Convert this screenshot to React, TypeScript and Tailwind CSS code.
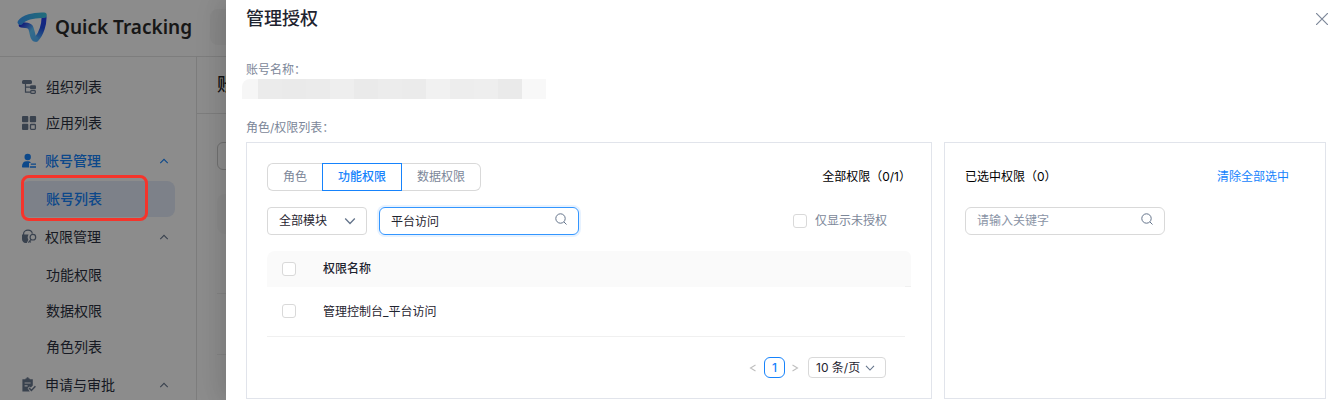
import React, { useState } from 'react';

type MenuItem = {
  label: string;
  icon?: React.ReactNode;
  kind: 'link' | 'group' | 'child';
  active?: boolean;
};

const OrgIcon = () => (
  <svg className="h-4 w-4" viewBox="0 0 16 16" fill="none">
    <rect x="1" y="1" width="10" height="4" rx="1.5" fill="currentColor" />
    <path d="M4.5 5v8.2h5M4.5 8.2h5" stroke="currentColor" strokeWidth="1.2" />
    <rect x="9" y="6.2" width="6" height="4" rx="1.2" fill="currentColor" />
    <rect x="9.7" y="11.6" width="4.6" height="2.8" rx="0.8" stroke="currentColor" strokeWidth="1.3" />
  </svg>
);

const AppsIcon = () => (
  <svg className="h-4 w-4" viewBox="0 0 16 16" fill="none">
    <rect x="1" y="1" width="6.3" height="6.3" rx="1" fill="currentColor" />
    <rect x="8.8" y="1" width="6.3" height="6.3" rx="1" fill="currentColor" />
    <rect x="1" y="8.8" width="6.3" height="6.3" rx="1" fill="currentColor" />
    <rect x="9.5" y="9.5" width="4.9" height="4.9" rx="0.8" stroke="currentColor" strokeWidth="1.3" />
  </svg>
);

const AccountIcon = () => (
  <svg className="h-4 w-4" viewBox="0 0 16 16" fill="none">
    <circle cx="6.7" cy="4" r="3.2" fill="currentColor" />
    <path d="M1 13.6C1 10 3 8.2 5.4 8.2h2.2c1.3 0 1.9.7 2.2 1.8H8v4.6H2c-.6 0-1-.4-1-1z" fill="currentColor" />
    <path d="M9.8 11.2H15M8.8 14H15" stroke="currentColor" strokeWidth="1.3" />
  </svg>
);

const PermissionIcon = () => (
  <svg className="h-4 w-4" viewBox="0 0 16 16" fill="none">
    <path d="M2.6 6V4.8C2.6 2.6 4.6 1.2 7 1.2s4 1.3 4.3 3.4" stroke="currentColor" strokeWidth="1.2" />
    <path d="M1 5.6h6.6C6.4 7.4 6.4 9.4 7.4 10.8L5.8 14H4C2.3 13.4 1 12 1 10z" fill="currentColor" />
    <circle cx="11.9" cy="8.2" r="2.8" stroke="currentColor" strokeWidth="1.2" />
    <path d="M10 10.4 7.4 13.6M8.6 12.2l1.3 1.2" stroke="currentColor" strokeWidth="1.2" />
  </svg>
);

const ApprovalIcon = () => (
  <svg className="h-4 w-4" viewBox="0 0 16 16" fill="none">
    <path
      fillRule="evenodd"
      d="M1.4 2.2h3V1.4h1a1.2 1.2 0 0 1 2.4 0h1v.8h3v6.2L9.8 10.6 8.4 9.4 6.6 11.2 8.8 14.6H1.4zM3.6 5.4v1.2h6V5.4zM3.6 8.2v1.2h3V8.2z"
      fill="currentColor"
    />
    <path d="m8 11 2.4 2.4L14.4 9.2" stroke="currentColor" strokeWidth="1.5" />
  </svg>
);

const Chevron = ({ className, d }: { className: string; d: string }) => (
  <svg className={className} viewBox="0 0 12 12" fill="none" stroke="currentColor" strokeWidth="1.3">
    <path d={d} />
  </svg>
);

const UP = 'M1.5 8.5L6 4l4.5 4.5';
const DOWN = 'M1.2 3.5L6 8.5l4.8-5';
const LEFT = 'M9 2.5L3 6l6 3.5';
const RIGHT = 'M3 2.5L9 6l-6 3.5';

const SearchIcon = () => (
  <svg className="pointer-events-none absolute top-1.5 right-3 h-3 w-3 text-[#64748b]" viewBox="0 0 12 12" fill="none" stroke="currentColor">
    <circle cx="5.5" cy="5.5" r="4.7" />
    <path d="M9 9l2.5 2.5" />
  </svg>
);

const Logo = () => (
  <svg className="h-[30px] w-[30px]" viewBox="0 0 30 30" fill="none" strokeLinecap="round" strokeLinejoin="round">
    <defs>
      <linearGradient id="fold" x1="3" y1="12" x2="20" y2="28" gradientUnits="userSpaceOnUse">
        <stop offset="0" stopColor="#1d22d8" />
        <stop offset="0.3" stopColor="#3f78ee" />
        <stop offset="0.55" stopColor="#62c8ff" />
        <stop offset="1" stopColor="#52b4ff" />
      </linearGradient>
      <linearGradient id="side" x1="27" y1="4" x2="20" y2="27" gradientUnits="userSpaceOnUse">
        <stop offset="0" stopColor="#2a3cf0" />
        <stop offset="0.5" stopColor="#1f4fe8" />
        <stop offset="1" stopColor="#52b4ff" />
      </linearGradient>
      <linearGradient id="top" x1="0" y1="8" x2="30" y2="3" gradientUnits="userSpaceOnUse">
        <stop offset="0" stopColor="#3a9dff" />
        <stop offset="1" stopColor="#3cc8e0" />
      </linearGradient>
    </defs>
    <path d="M27 5c.3 7-2.7 17-7.5 22" stroke="url(#side)" strokeWidth="5" />
    <path d="M4.5 12.8c4 .9 7-.4 9 2.6 2 3.2 1.8 11.4 4.8 11.6" stroke="url(#fold)" strokeWidth="5.5" />
    <path d="M3.4 10.2C6.5 5.5 16 2.8 27 3.2" stroke="url(#top)" strokeWidth="5.5" />
  </svg>
);

const MENU: MenuItem[] = [
  { label: '组织列表', icon: <OrgIcon />, kind: 'link' },
  { label: '应用列表', icon: <AppsIcon />, kind: 'link' },
  { label: '账号管理', icon: <AccountIcon />, kind: 'group', active: true },
  { label: '账号列表', kind: 'child', active: true },
  { label: '权限管理', icon: <PermissionIcon />, kind: 'group' },
  { label: '功能权限', kind: 'child' },
  { label: '数据权限', kind: 'child' },
  { label: '角色列表', kind: 'child' },
  { label: '申请与审批', icon: <ApprovalIcon />, kind: 'group' }
];

const TABS = ['角色', '功能权限', '数据权限'];

// Shades of the masked account name
const MASK_CELLS = ['bg-[#ebebeb]', 'bg-[#eaeaea]', 'bg-[#ebebeb]', 'bg-[#eeeeee]', 'bg-[#eaeaea]', 'bg-[#ececec]', 'bg-[#ebebeb]', 'bg-[#f1f1f1]', 'bg-[#ededed]', 'bg-[#eeeeee]', 'bg-[#eaeaea]'];

const CHECKBOX =
  'block h-3.5 w-3.5 shrink-0 appearance-none rounded-[3px] border border-[#d9d9d9] bg-white checked:border-[#1683fc] checked:bg-[#1683fc]';

const SidebarItem = ({ item }: { item: MenuItem }) => {
  if (item.kind === 'group') {
    return (
      <button
        type="button"
        className={`flex h-10 w-full items-center gap-2 pr-1.5 text-left ${item.active ? 'font-medium text-[#1683fc]' : 'text-[#2b3140]'}`}
      >
        <span className={item.active ? '' : 'text-[#69788f]'}>{item.icon}</span>
        <span className="flex-1">{item.label}</span>
        <Chevron className={`h-2.5 w-2.5 ${item.active ? '' : 'text-[#69788f]'}`} d={UP} />
      </button>
    );
  }
  return (
    <a
      href="#"
      className={`flex h-9 items-center gap-[9px] rounded-lg ${item.kind === 'child' ? 'pl-[25px]' : ''} ${
        item.active ? 'bg-[#e3ebf9] font-medium text-[#1683fc]' : 'text-[#2b3140]'
      }`}
    >
      {item.icon && <span className="text-[#69788f]">{item.icon}</span>}
      {item.label}
    </a>
  );
};

const Backdrop = () => (
  <div className="flex h-full flex-col bg-white text-sm">
    <header className="flex h-[57px] shrink-0 items-center border-b border-[#e4e4e4] pb-0.5 pl-[17px]">
      <Logo />
      <span className="ml-2 w-[155px] font-['Noto_Sans','Noto_Sans_CJK_SC',sans-serif] text-[19px] leading-7 font-semibold text-[#2b2b2b]">Quick Tracking</span>
      <div className="h-9 flex-1 rounded-lg bg-[#f7f7f7]" />
    </header>
    <div className="flex min-h-0 flex-1">
      <nav className="w-[197px] shrink-0 border-r border-[#e4e4e4] pt-3 pr-[21px] pl-[21px]">
        {MENU.map((item) => (
          <SidebarItem key={item.label} item={item} />
        ))}
      </nav>
      <main className="flex-1">
        <h1 className="border-b border-[#e4e4e4] py-3.5 pl-5 text-lg leading-7 font-medium text-[#222222]">账</h1>
        <div className="pt-7 pl-5">
          <div className="h-7 rounded-md border border-[#cccccc]" />
          <div className="mt-6 h-10 rounded-lg bg-[#fafafa]" />
          <div className="h-[60px] border-b border-[#eeeeee]" />
          <div className="h-[61px] border-b border-[#eeeeee]" />
        </div>
      </main>
    </div>
  </div>
);

const AvailablePanel = () => {
  const [tab, setTab] = useState('功能权限');
  const [keyword, setKeyword] = useState('平台访问');

  return (
    <section className="min-w-0 flex-1 border border-[#e1e4eb] p-5">
      <div className="flex items-center justify-between">
        <div className="flex">
          {TABS.map((t) => (
            <button
              key={t}
              type="button"
              onClick={() => setTab(t)}
              className={`h-7 border px-[15px] first:rounded-l-md last:rounded-r-md ${
                tab === t ? 'border-[#1683fc] font-medium text-[#1683fc]' : 'border-[#d9d9d9] text-[#7c8799] first:border-r-0 last:border-l-0'
              }`}
            >
              {t}
            </button>
          ))}
        </div>
        <span className="text-black">全部权限（0/1）</span>
      </div>

      <div className="mt-4 flex items-center">
        <div className="relative w-[100px]">
          <select aria-label="模块" className="block h-7 w-full appearance-none rounded border border-[#d9d9d9] bg-white pl-[11px] text-[#1f2430]">
            <option>全部模块</option>
          </select>
          <Chevron className="pointer-events-none absolute top-2 right-[11px] h-3 w-3 text-[#64748b]" d={DOWN} />
        </div>
        <div className="relative ml-3 w-[200px]">
          <input
            type="text"
            aria-label="搜索权限"
            value={keyword}
            onChange={(e) => setKeyword(e.target.value)}
            className="block h-7 w-full rounded-md border border-[#3396ff] pr-8 pb-0.5 pl-[11px] text-[#1f2430] shadow-[0_0_0_2px_rgba(22,131,252,0.1)] outline-none"
          />
          <SearchIcon />
        </div>
        <label className="mr-6 ml-auto flex items-center gap-2 text-[#7c8799]">
          <input type="checkbox" className={CHECKBOX} />
          仅显示未授权
        </label>
      </div>

      <table className="mt-4 w-full table-fixed border-separate border-spacing-0 text-left text-[#1f2430]">
        <thead>
          <tr className="h-9">
            <th className="w-11 rounded-tl-lg bg-[#fafafa] pl-[15px]">
              <input type="checkbox" aria-label="全选" className={CHECKBOX} />
            </th>
            <th className="bg-[#fafafa] pl-3 font-medium">权限名称</th>
            <th className="w-1.5 rounded-tr-lg border-b border-[#f0f0f0] bg-[#fafafa]" />
          </tr>
        </thead>
        <tbody>
          <tr className="h-[50px]">
            <td className="border-b border-[#f0f0f0] pb-0.5 pl-[15px]">
              <input type="checkbox" aria-label="管理控制台_平台访问" className={CHECKBOX} />
            </td>
            <td className="border-b border-[#f0f0f0] pl-3">管理控制台_平台访问</td>
            <td />
          </tr>
        </tbody>
      </table>

      <div className="mt-5 flex items-center justify-end pr-[25px]">
        <button type="button" aria-label="上一页" className="mr-1.5 text-[#bfbfbf]">
          <Chevron className="block h-2.5 w-2.5" d={LEFT} />
        </button>
        <button type="button" className="h-[21px] w-[21px] rounded-md border border-[#1683fc] font-medium text-[#1683fc]">
          1
        </button>
        <button type="button" aria-label="下一页" className="mr-2 ml-[5px] text-[#bfbfbf]">
          <Chevron className="block h-2.5 w-2.5" d={RIGHT} />
        </button>
        <div className="relative w-[78px]">
          <select aria-label="每页条数" className="block h-[21px] w-full appearance-none rounded border border-[#d9d9d9] bg-white pl-[7px] text-[#1f2430]">
            <option>10 条/页</option>
          </select>
          <Chevron className="pointer-events-none absolute top-1.5 right-[11px] h-2.5 w-2.5 text-[#64748b]" d={DOWN} />
        </div>
      </div>
    </section>
  );
};

const SelectedPanel = () => (
  <section className="w-[382px] shrink-0 border border-[#e1e4eb] p-5">
    <div className="flex h-7 items-center justify-between pr-4">
      <span className="text-black">已选中权限（0）</span>
      <button type="button" className="text-[#1683fc]">
        清除全部选中
      </button>
    </div>
    <div className="relative mt-4 w-[200px]">
      <input
        type="text"
        aria-label="搜索已选权限"
        placeholder="请输入关键字"
        className="block h-7 w-full rounded-md border border-[#d9d9d9] pr-8 pb-0.5 pl-[11px] outline-none placeholder:text-[#8a94a6]"
      />
      <SearchIcon />
    </div>
  </section>
);

export default function App() {
  return (
    <div className="relative h-screen overflow-hidden font-[Inter,'Noto_Sans_CJK_SC',sans-serif]">
      <Backdrop />
      <div className="absolute inset-0 bg-black/45" />
      <div className="absolute top-[175px] left-[21px] h-[46px] w-[127px] rounded-lg border-3 border-[#f5342b]" />

      <div
        role="dialog"
        aria-label="管理授权"
        className="absolute inset-y-0 right-0 left-[226px] bg-white pl-5 text-xs text-[#1f2430] shadow-[-6px_0_16px_rgba(0,0,0,0.08),-9px_0_28px_rgba(0,0,0,0.05)]"
      >
        <div className="flex h-[38px] items-center justify-between">
          <h2 className="text-lg font-medium">管理授权</h2>
          <button type="button" aria-label="关闭" className="text-[#7c8799]">
            <svg className="block h-3 w-3" viewBox="0 0 12 12" stroke="currentColor" strokeWidth="1.2">
              <path d="M0 0l12 12M12 0L0 12" />
            </svg>
          </button>
        </div>
        <div className="pr-0.5">
          <p className="mt-[21px] h-5 leading-[22px] text-[#7c8799]">账号名称：</p>
          <div className="-ml-1 flex h-5 overflow-hidden rounded-tl-lg">
            <span className="w-4 bg-[#f6f6f6]" />
            {MASK_CELLS.map((shade, i) => (
              <span key={i} className={`w-6 ${shade}`} />
            ))}
            <span className="w-6 bg-[#f8f8f8]" />
          </div>
          <p className="mt-[18px] h-5 leading-[22px] text-[#7c8799]">角色/权限列表：</p>
          <div className="mt-[5px] flex gap-3">
            <AvailablePanel />
            <SelectedPanel />
          </div>
        </div>
      </div>
    </div>
  );
}
